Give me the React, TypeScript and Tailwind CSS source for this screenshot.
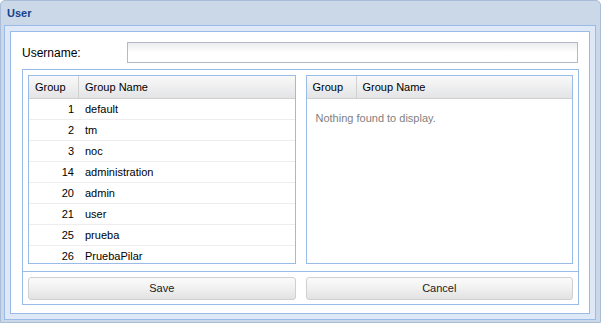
import React from 'react';

const groups = [
  { id: 1, name: 'default' },
  { id: 2, name: 'tm' },
  { id: 3, name: 'noc' },
  { id: 14, name: 'administration' },
  { id: 20, name: 'admin' },
  { id: 21, name: 'user' },
  { id: 25, name: 'prueba' },
  { id: 26, name: 'PruebaPilar' },
];

type Group = { id: number; name: string };

const GridHeader = () => (
  <div className="flex h-[23px] shrink-0 border-b border-[#d0d0d0] bg-gradient-to-b from-[#f9f9f9] to-[#e3e4e6] text-[11px] text-black">
    <div className="flex w-[50px] items-center border-r border-[#d0d0d0] pl-[6px]">Group</div>
    <div className="flex flex-1 items-center pl-[6px]">Group Name</div>
  </div>
);

const Grid = ({ rows }: { rows: Group[] }) => (
  <div className="flex h-[189px] flex-1 flex-col overflow-hidden border border-[#99bbe8] bg-white">
    <GridHeader />
    {rows.length === 0 ? (
      <div className="pl-[9px] pt-[11px] text-[11px] text-[#808080]">Nothing found to display.</div>
    ) : (
      rows.map((g) => (
        <div key={g.id} className="flex h-[21px] shrink-0 border-b border-[#ededed] text-[11px] text-black">
          <div className="flex w-[50px] items-center justify-end pr-[5px]">{g.id}</div>
          <div className="flex flex-1 items-center pl-[6px]">{g.name}</div>
        </div>
      ))
    )}
  </div>
);

const Button = ({ label }: { label: string }) => (
  <button
    type="button"
    className="h-[23px] flex-1 rounded-[3px] border border-[#d0d0d0] bg-gradient-to-b from-[#fbfbfb] via-[#f0f0f0] to-[#e2e2e2] text-[11px] text-[#222]"
  >
    {label}
  </button>
);

export default function App() {
  return (
    <div
      className="flex h-[323px] w-[601px] flex-col rounded-t-[5px] border border-[#a9bdd8] bg-[#cbd8e8]"
      style={{ fontFamily: '"Liberation Sans", Arial, sans-serif' }}
    >
      <div className="flex h-[24px] shrink-0 items-center pl-[6px] pt-[1px] text-[11px] font-bold text-[#15428b]">User</div>
      <div className="ml-[3px] mr-[4px] mb-[2px] flex flex-1 flex-col border border-[#99bbe8] bg-[#dfe8f6] p-[5px]">
        <div className="flex flex-1 flex-col border border-[#99bbe8] bg-white pl-[11px] pr-[11px] pt-[10px]">
          <div className="flex h-[21px] items-center">
            <label className="w-[105px] text-[12px] text-black">Username:</label>
            <input
              type="text"
              className="h-[21px] flex-1 border border-[#b5b8c8] bg-gradient-to-b from-[#ececec] via-white to-white outline-none"
            />
          </div>
          <div className="mt-[6px] mr-[-1px] flex flex-col border border-[#99bbe8]">
            <div className="flex gap-[10px] border-b border-[#99bbe8] px-[5px] pb-[7px] pt-[5px]">
              <Grid rows={groups} />
              <Grid rows={[]} />
            </div>
            <div className="flex gap-[10px] px-[5px] pb-[4px] pt-[5px]">
              <Button label="Save" />
              <Button label="Cancel" />
            </div>
          </div>
        </div>
      </div>
    </div>
  );
}
